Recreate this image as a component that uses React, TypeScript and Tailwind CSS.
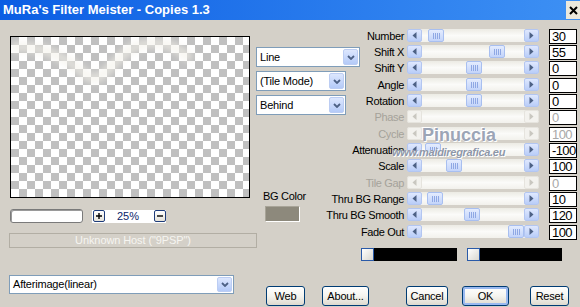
import React from 'react';

type Row = { label: string; value: string; thumb?: number; disabled?: boolean; tall?: boolean };

const rows: Row[] = [
  { label: 'Number', value: '30', thumb: 6 },
  { label: 'Shift X', value: '55', thumb: 67 },
  { label: 'Shift Y', value: '0', thumb: 44, tall: true },
  { label: 'Angle', value: '0', thumb: 44 },
  { label: 'Rotation', value: '0', thumb: 44 },
  { label: 'Phase', value: '0', disabled: true, tall: true },
  { label: 'Cycle', value: '100', disabled: true },
  { label: 'Attenuation', value: '-100', thumb: 3 },
  { label: 'Scale', value: '100', thumb: 24, tall: true },
  { label: 'Tile Gap', value: '0', disabled: true },
  { label: 'Thru BG Range', value: '10', thumb: 5 },
  { label: 'Thru BG Smooth', value: '120', thumb: 42, tall: true },
  { label: 'Fade Out', value: '100', thumb: 86 },
];

function SArrow({ dir, disabled }: { dir: 'l' | 'r'; disabled?: boolean }) {
  return (
    <div
      className={`w-[15px] h-[13px] shrink-0 rounded-[2px] border flex items-center justify-center ${
        disabled
          ? 'border-[#e6e4de] bg-[#f3f2ee]'
          : 'border-[#b3c6f1] bg-gradient-to-b from-[#dfe8fe] to-[#b9cdf8]'
      }`}
    >
      <svg width="5" height="7" viewBox="0 0 5 7">
        <path d={dir === 'l' ? 'M4.5 0 L0.5 3.5 L4.5 7Z' : 'M0.5 0 L4.5 3.5 L0.5 7Z'} fill={disabled ? '#c9c7c0' : '#4d6185'} />
      </svg>
    </div>
  );
}

function Thumb({ offset }: { offset: number }) {
  return (
    <div
      className="w-[16px] h-[13px] shrink-0 rounded-[2px] border border-[#a8bff0] bg-gradient-to-b from-[#e4ecfe] to-[#c3d4fa] flex items-center justify-center gap-[1px]"
      style={{ marginLeft: offset }}
    >
      <div className="w-[1px] h-[6px] bg-[#8fa8e4]" />
      <div className="w-[1px] h-[6px] bg-[#8fa8e4]" />
      <div className="w-[1px] h-[6px] bg-[#8fa8e4]" />
      <div className="w-[1px] h-[6px] bg-[#8fa8e4]" />
    </div>
  );
}

function Slider({ thumb, disabled }: { thumb?: number; disabled?: boolean }) {
  return (
    <div className="w-[132px] h-[13px] shrink-0 flex items-stretch rounded-[3px] bg-gradient-to-b from-[#ecebe4] via-[#fbfbf9] to-[#f2f1ec]">
      <SArrow dir="l" disabled={disabled} />
      <div className="flex-1 flex items-stretch">{thumb !== undefined && !disabled && <Thumb offset={thumb} />}</div>
      <SArrow dir="r" disabled={disabled} />
    </div>
  );
}

function Dropdown({ text, w, h }: { text: string; w: string; h: string }) {
  return (
    <div className={`${w} ${h} shrink-0 bg-white border border-[#7f9db9] flex items-center justify-between pl-[3px] pr-[1px]`}>
      <span className="text-[11px] leading-[13px] text-black tracking-[-0.2px] whitespace-nowrap">{text}</span>
      <div className="w-[15px] h-[calc(100%-2px)] rounded-[2px] border border-[#bccdf3] bg-gradient-to-b from-[#dde7fe] to-[#b4caf8] flex items-center justify-center">
        <svg width="8" height="5" viewBox="0 0 8 5">
          <path d="M1 1 L4 4 L7 1" stroke="#4d6185" strokeWidth="1.8" fill="none" />
        </svg>
      </div>
    </div>
  );
}

function XPButton({ children, w, focused }: { children: React.ReactNode; w: string; focused?: boolean }) {
  return (
    <div
      className={`${w} h-[20px] shrink-0 rounded-[3px] border border-[#003c74] bg-gradient-to-b from-white via-[#f5f4ef] to-[#dedacf] flex items-center justify-center text-[11px] text-black tracking-[-0.2px] ${
        focused ? 'shadow-[inset_0_0_0_2px_#9ab9f0]' : ''
      }`}
    >
      {children}
    </div>
  );
}

function SmallBtn({ minus }: { minus?: boolean }) {
  return (
    <div className="w-[12px] h-[12px] shrink-0 rounded-[2px] border border-[#1e3c7a] bg-gradient-to-b from-white to-[#e6e3da] flex items-center justify-center">
      <svg width="6" height="6" viewBox="0 0 6 6">
        <path d={minus ? 'M0 3 H6' : 'M0 3 H6 M3 0 V6'} stroke="#000" strokeWidth="1.4" />
      </svg>
    </div>
  );
}

export default function App() {
  return (
    <div className="relative w-[580px] h-[307px] overflow-hidden bg-[#d4d0c8] flex flex-col font-['Liberation_Sans',Arial,sans-serif] text-black">
      {/* title bar */}
      <div className="h-[20px] shrink-0 flex items-start justify-between bg-gradient-to-r from-[#0a5de3] to-[#3d90f4] pl-[3px]">
        <span className="text-white font-bold text-[13px] leading-[20px] whitespace-nowrap">MuRa's Filter Meister - Copies 1.3</span>
        <div className="w-[14px] h-[18px] mt-[1px] bg-[#ebe8dc] flex items-center justify-center">
          <svg width="9" height="9" viewBox="0 0 9 9">
            <path d="M1 1 L8 8 M8 1 L1 8" stroke="#000" strokeWidth="2" />
          </svg>
        </div>
      </div>

      {/* body */}
      <div className="flex-1 flex">
        {/* left column */}
        <div className="w-[256px] shrink-0 pl-[9px] flex flex-col items-start">
          <div className="relative mt-[16px] ml-[1px] w-[240px] h-[162px] border border-black bg-[image:conic-gradient(#fff_25%,#c0c0c0_0_50%,#fff_0_75%,#c0c0c0_0)] bg-[length:16px_16px] overflow-hidden">
            <svg className="absolute left-0 top-0" width="238" height="60" viewBox="0 0 238 60">
              <defs>
                <filter id="soft" x="-20%" y="-50%" width="140%" height="200%">
                  <feGaussianBlur stdDeviation="3" />
                </filter>
              </defs>
              <path
                d="M0 10 C30 8 55 20 75 38 C90 50 100 25 120 12 C140 2 160 4 180 22"
                stroke="#f4f2ea"
                strokeOpacity="0.6"
                strokeWidth="10"
                fill="none"
                filter="url(#soft)"
              />
            </svg>
          </div>
          <div className="flex items-center mt-[11px] ml-[1px] h-[14px]">
            <div className="w-[73px] h-[14px] bg-white border border-[#7a7a7a] rounded-[3px] shadow-[inset_1px_1px_0_#9a9a9a]" />
            <div className="ml-[9px] w-[74px] h-[13px] bg-white flex items-center pl-[1px]">
              <SmallBtn />
              <span className="ml-[12px] text-[11px] leading-[13px] text-[#0a246a]">25%</span>
              <div className="ml-[15px]">
                <SmallBtn minus />
              </div>
            </div>
          </div>
          <div className="mt-[10px] w-[248px] h-[15px] border border-[#b2aea4] flex items-center justify-center">
            <span className="text-[11px] leading-[13px] text-[#f6f5f1] tracking-[-0.1px] whitespace-nowrap">Unknown Host ("9PSP")</span>
          </div>
          <div className="mt-[27px]">
            <Dropdown text="Afterimage(linear)" w="w-[225px]" h="h-[19px]" />
          </div>
        </div>

        {/* right area */}
        <div className="flex-1 flex flex-col">
          <div className="flex">
            {/* middle column */}
            <div className="w-[65px] shrink-0 flex flex-col pt-[27px]">
              <Dropdown text="Line" w="w-[104px]" h="h-[20px]" />
              <div className="mt-[4px]">
                <Dropdown text="(Tile Mode)" w="w-[90px]" h="h-[20px]" />
              </div>
              <div className="mt-[4px]">
                <Dropdown text="Behind" w="w-[90px]" h="h-[20px]" />
              </div>
              <span className="mt-[74px] ml-[7px] text-[11px] leading-[14px] tracking-[-0.3px] whitespace-nowrap">BG Color</span>
              <div className="mt-[3px] ml-[9px] w-[35px] h-[16px] bg-[#8d897c] border border-t-[#a8a498] border-l-[#a8a498] border-r-white border-b-white" />
            </div>

            {/* rows column */}
            <div className="flex flex-col pt-[9px]">
              {rows.map((r) => (
                <div key={r.label} className={`flex items-start ${r.tall ? 'h-[17px]' : 'h-[16px]'}`}>
                  <div className="w-[83px] shrink-0 flex justify-end">
                    <span
                      className={`text-[11px] leading-[15px] tracking-[-0.35px] whitespace-nowrap ${
                        r.disabled ? 'text-[#a5a29a]' : 'text-black'
                      }`}
                    >
                      {r.label}
                    </span>
                  </div>
                  <div className="ml-[3px]">
                    <Slider thumb={r.thumb} disabled={r.disabled} />
                  </div>
                  <div
                    className={`ml-[10px] w-[28px] h-[15px] shrink-0 bg-white border border-black text-[13px] leading-[13px] pl-[2px] tracking-[-0.6px] ${
                      r.disabled ? 'text-[#a8a8a8]' : 'text-black'
                    }`}
                  >
                    {r.value}
                  </div>
                </div>
              ))}
              <div className="mt-[7px] ml-[40px] flex">
                <div className="w-[96px] h-[13px] bg-black flex">
                  <div className="w-[13px] h-[13px] border border-[#2a5aa8] bg-gradient-to-br from-white to-[#d9d7d0]" />
                </div>
                <div className="ml-[10px] w-[95px] h-[13px] bg-black flex">
                  <div className="w-[13px] h-[13px] border border-[#2a5aa8] bg-gradient-to-br from-white to-[#d9d7d0]" />
                </div>
              </div>
            </div>
          </div>

          {/* buttons */}
          <div className="mt-[25px] pl-[10px] flex">
            <XPButton w="w-[39px]">Web</XPButton>
            <div className="ml-[17px]">
              <XPButton w="w-[47px]">About...</XPButton>
            </div>
            <div className="ml-[37px]">
              <XPButton w="w-[42px]">Cancel</XPButton>
            </div>
            <div className="ml-[14px]">
              <XPButton w="w-[47px]" focused>
                OK
              </XPButton>
            </div>
            <div className="ml-[21px]">
              <XPButton w="w-[39px]">Reset</XPButton>
            </div>
          </div>
        </div>
      </div>

      {/* watermark overlay */}
      <span className="absolute left-[422px] top-[125px] text-[18px] leading-[20px] font-bold text-[#9ca5b6] [text-shadow:0_0_1px_#fff,1px_1px_0_#fff,-1px_-1px_0_#fff] whitespace-nowrap">
        Pinuccia
      </span>
      <span className="absolute left-[392px] top-[146px] text-[11px] leading-[13px] font-bold italic text-[#8e97a8] [text-shadow:0_0_1px_#fff,1px_1px_0_#fff] whitespace-nowrap tracking-[-0.3px]">
        www.maidiregrafica.eu
      </span>
    </div>
  );
}
